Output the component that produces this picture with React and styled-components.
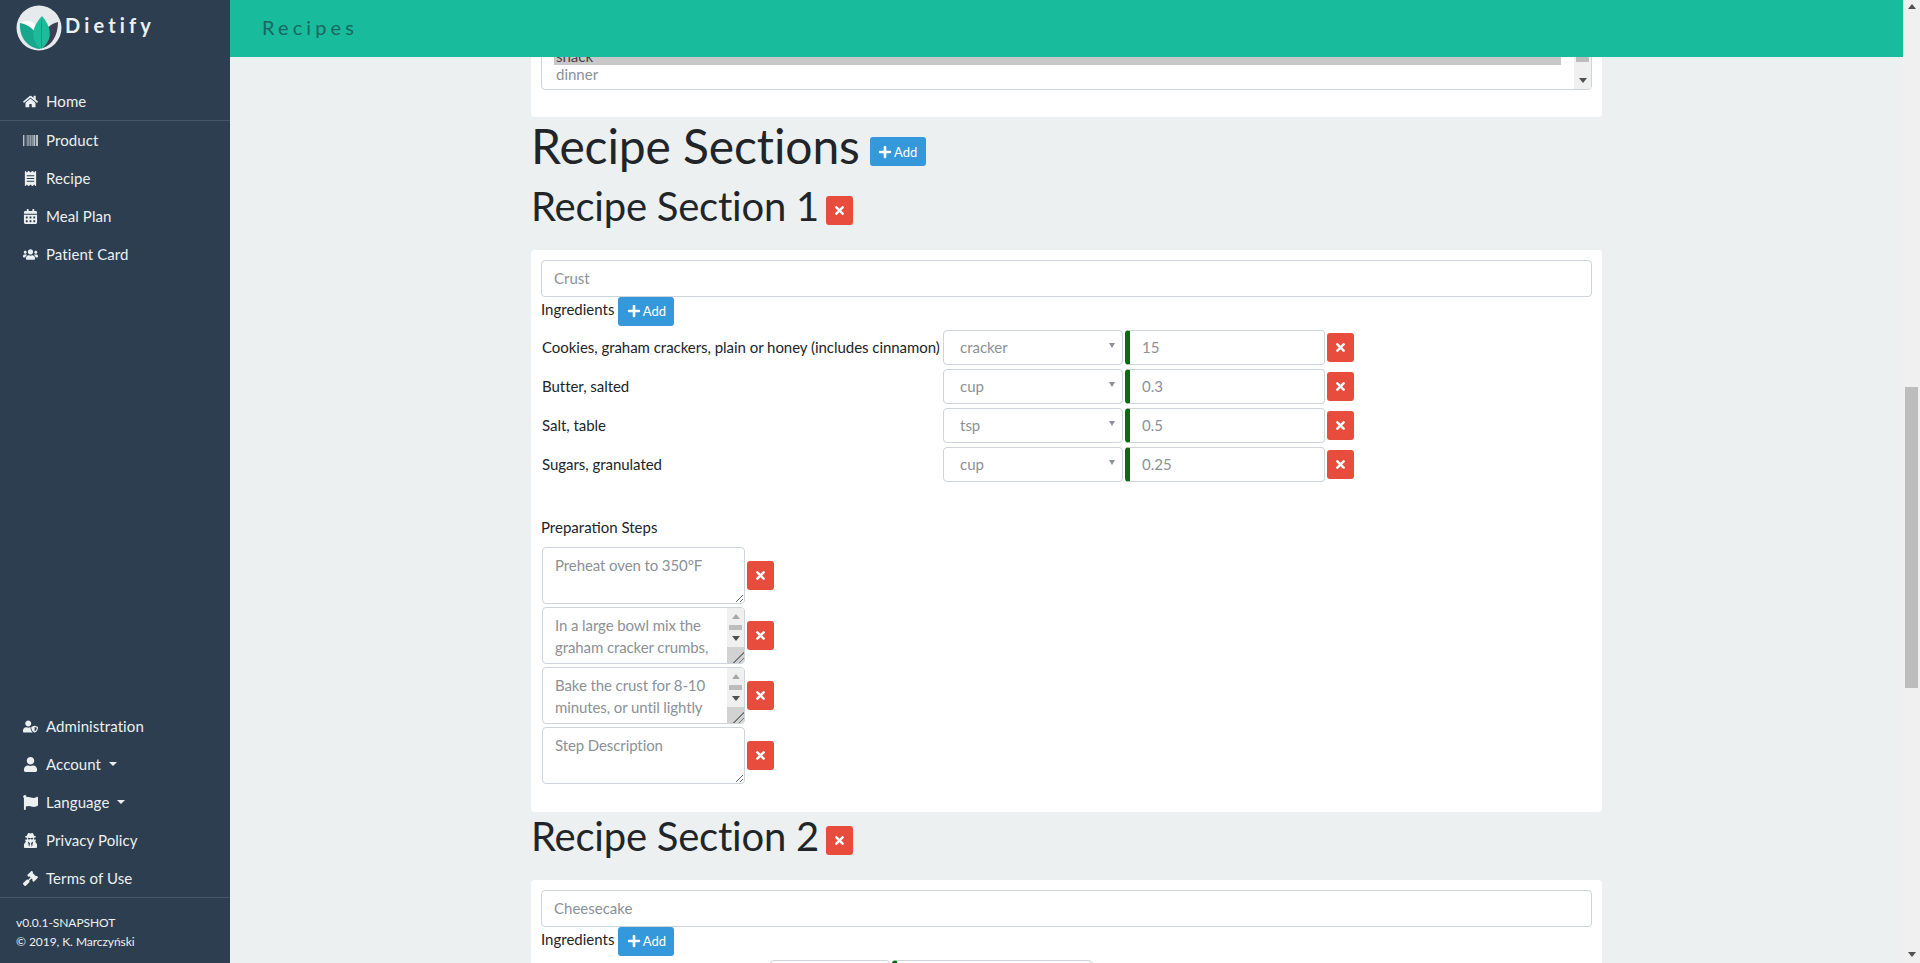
import React from 'react'
import styled, { createGlobalStyle } from 'styled-components'
import {
  FaHome,
  FaBarcode,
  FaReceipt,
  FaCalendarAlt,
  FaUsers,
  FaUserShield,
  FaUser,
  FaFlag,
  FaUserSecret,
  FaGavel,
  FaPlus,
  FaTimes,
} from 'react-icons/fa'

const GlobalStyle = createGlobalStyle`
  html, body {
    margin: 0;
    height: 100%;
    overflow: hidden;
  }
  body {
    font-family: Lato, "Liberation Sans", sans-serif;
    font-size: 15px;
    line-height: 1.5;
    color: #212529;
    background: #ecf0f1;
  }
  * {
    box-sizing: border-box;
  }
`

const Layout = styled.div`
  display: grid;
  grid-template-columns: 230px 1fr 17px;
  height: 963px;
  overflow: hidden;
`

const Sidebar = styled.aside`
  background: #2c3e50;
  color: #ecf0f1;
  display: flex;
  flex-direction: column;
  height: 963px;
`

const Brand = styled.div`
  display: flex;
  align-items: flex-start;
  height: 82px;
  padding: 5px 0 0 16px;
  gap: 3px;
`

const BrandName = styled.span`
  font-size: 20px;
  font-weight: 700;
  letter-spacing: 4.15px;
  line-height: 40px;
  color: #ecf0f1;
`

const NavList = styled.nav`
  display: flex;
  flex-direction: column;
`

const NavItem = styled.a`
  display: flex;
  align-items: center;
  height: 38px;
  padding-left: 23px;
  color: #ecf0f1;
  letter-spacing: 0.08px;
  white-space: nowrap;
`

const NavIcon = styled.span`
  display: inline-flex;
  flex: 0 0 23px;
  svg {
    width: auto;
    height: 15px;
  }
`

const Caret = styled.span`
  width: 0;
  height: 0;
  margin-left: 8px;
  border-top: 4px solid #ecf0f1;
  border-left: 4px solid transparent;
  border-right: 4px solid transparent;
`

const Divider = styled.hr`
  margin: 0;
  border: 0;
  border-top: 1px solid #44576a;
`

const Spacer = styled.div`
  flex: 1;
`

const Footer = styled.div`
  flex: 0 0 65px;
  padding: 15px 16px 0;
  font-size: 12px;
  line-height: 19px;
  letter-spacing: -0.06px;
`

const Main = styled.div`
  display: flex;
  flex-direction: column;
  height: 963px;
  overflow: hidden;
  min-width: 0;
`

const TopBar = styled.header`
  position: relative;
  z-index: 1;
  flex: 0 0 57px;
  background: #18bc9c;
  display: flex;
  align-items: center;
  padding: 0 0 4px 32px;
  font-size: 20px;
  letter-spacing: 4.1px;
  color: #1b6660;
`

const Content = styled.main`
  flex: 1;
  min-height: 0;
  width: 1071px;
  margin-left: 301px;
`

/* the page is scrolled: the first card starts above the top bar */
const Card = styled.section`
  background: #fff;
  border-radius: 4px;
  padding: 10px 10px ${p => p.$bottom || 10}px;
  margin-top: ${p => p.$top || 0}px;
`

const ListBox = styled.div`
  display: flex;
  height: 44px;
  border: 1px solid #ced4da;
  border-radius: 4px;
  overflow: hidden;
`

const ListOptions = styled.div`
  flex: 1;
  padding-left: 12px;
  color: #8b9197;
`

const ListOption = styled.div`
  padding-left: 2px;
  margin-right: 13px;
  height: 18px;
  line-height: 18px;
  background: ${p => (p.$selected ? '#c8c8c8' : 'transparent')};
  color: ${p => (p.$selected ? '#444' : 'inherit')};
`

const ListRail = styled.div`
  width: 17px;
  background: #f0f0f0;
  display: flex;
  flex-direction: column;
  justify-content: space-between;
  align-items: center;
`

const ListThumb = styled.div`
  width: 13px;
  height: 15px;
  background: #bdbdbd;
`

const ArrowDown = styled.span`
  width: 0;
  height: 0;
  margin-bottom: ${p => (p.$centered ? '0' : '6px')};
  border-top: 5px solid #505050;
  border-left: 4.5px solid transparent;
  border-right: 4.5px solid transparent;
`

const ArrowUp = styled.span`
  width: 0;
  height: 0;
  margin-top: ${p => (p.$centered ? '0' : '4px')};
  border-bottom: 5px solid ${p => (p.$muted ? '#a8a8a8' : '#505050')};
  border-left: 4.5px solid transparent;
  border-right: 4.5px solid transparent;
`

const Button = styled.button`
  display: inline-flex;
  flex: none;
  align-items: center;
  justify-content: center;
  gap: 2px;
  height: 29px;
  width: ${p => (p.$danger ? '27px' : '56px')};
  padding: 0;
  border: 0;
  border-radius: 3px;
  font-family: inherit;
  font-size: 13px;
  font-weight: 400;
  letter-spacing: 0;
  color: #fff;
  background: ${p => (p.$danger ? '#e74c3c' : '#3498db')};
  svg {
    font-size: ${p => (p.$danger ? 13 : 14)}px;
  }
`

const HeadingOne = styled.h1`
  display: flex;
  align-items: center;
  gap: 10px;
  height: 58px;
  margin: 0 0 7px;
  font-size: 48px;
  font-weight: 400;
  line-height: 58px;
  letter-spacing: -0.12px;
  ${Button} {
    margin-top: 11px;
  }
`

const HeadingTwo = styled.h2`
  display: flex;
  align-items: center;
  gap: 7px;
  height: 48px;
  margin: 0 0 20px;
  font-size: 40px;
  font-weight: 400;
  line-height: 48px;
  letter-spacing: -0.22px;
  ${Button} {
    margin-top: 9px;
  }
`

const TextInput = styled.input`
  display: block;
  width: 100%;
  height: 36.5px;
  padding: 0 12px;
  border: 1px solid #ced4da;
  border-radius: 4px;
  font-family: inherit;
  font-size: 15px;
  color: #495057;
  background: #fff;
  &::placeholder {
    color: #8b9197;
    opacity: 1;
  }
`

const LabelRow = styled.div`
  display: flex;
  align-items: flex-start;
  gap: 4px;
  height: 33px;
`

const LabelText = styled.span`
  line-height: 24px;
`

const Rows = styled.div`
  display: grid;
  grid-template-columns: ${p => p.$columns};
  grid-auto-rows: 35px;
  row-gap: 4px;
  column-gap: 2px;
  align-items: center;
`

const RowLabel = styled.span`
  padding-left: 1px;
  letter-spacing: -0.04px;
  white-space: nowrap;
  overflow: hidden;
`

const UnitSelect = styled.div`
  display: flex;
  align-items: center;
  justify-content: space-between;
  height: 35px;
  padding: 0 7px 0 16px;
  border: 1px solid #ced4da;
  border-radius: 4px;
  color: #8b9197;
  &::after {
    content: '';
    margin-left: auto;
    border-top: 5px solid #8b9197;
    border-left: 3px solid transparent;
    border-right: 3px solid transparent;
    margin-bottom: 3px;
  }
`

const AmountBox = styled.div`
  display: flex;
  align-items: center;
  height: 35px;
  padding-left: 12px;
  border: 1px solid #ced4da;
  border-left: 5px solid #0a6c12;
  border-radius: 4px;
  color: #8b9197;
`

const StepsTitle = styled.div`
  margin-top: 34.5px;
  height: 31px;
  line-height: 22px;
`

const Steps = styled.div`
  display: flex;
  flex-direction: column;
  gap: 3px;
  padding-left: 1px;
`

const StepRow = styled.div`
  display: flex;
  align-items: center;
  gap: 2px;
`

const StepBox = styled.div`
  position: relative;
  width: 203px;
  height: 57px;
`

const StepArea = styled.textarea`
  display: block;
  width: 203px;
  height: 57px;
  padding: 6px ${p => (p.$scroll ? '29px' : '12px')} 6px 12px;
  border: 1px solid #ced4da;
  border-radius: 4px;
  font-family: inherit;
  font-size: 15px;
  line-height: 22px;
  letter-spacing: -0.1px;
  color: #8b9197;
  background: #fff;
  overflow: hidden;
  &::placeholder {
    color: #8b9197;
    opacity: 1;
  }
`

/* scrollbar and resize corner of a textarea whose text is longer than the box */
const StepRail = styled.div`
  position: absolute;
  top: 1px;
  right: 1px;
  bottom: 1px;
  width: 17px;
  display: flex;
  flex-direction: column;
  background: #f0f0f0;
  border-radius: 0 3px 3px 0;
  overflow: hidden;
`

const RailButton = styled.div`
  flex: 0 0 17px;
  display: flex;
  align-items: center;
  justify-content: center;
`

const StepThumb = styled.div`
  flex: 0 0 5px;
  margin: 0 2px;
  background: #bdbdbd;
`

const ResizeCorner = styled.div`
  flex: 1;
  background-color: #d2d2d2;
  background-image: linear-gradient(
    135deg,
    transparent 66%,
    #777 66%,
    #777 70%,
    transparent 70%,
    transparent 82%,
    #777 82%,
    #777 86%,
    transparent 86%
  );
`

const Rail = styled.div`
  height: 963px;
  background: #f0f0f0;
  display: flex;
  flex-direction: column;
  align-items: center;
`

const RailThumb = styled.div`
  width: 13px;
  height: 301px;
  margin-top: 378px;
  background: #bdbdbd;
`

const RailGap = styled.div`
  flex: 1;
`

const Logo = () => (
  <svg width="46" height="46" viewBox="0 0 46 46">
    <circle cx="23" cy="23" r="22.5" fill="#e6eaec" />
    <path d="M4 18 C11 13 20 17 23 26 L22 30 C17 23 10 20 4 18 Z" fill="#fff" />
    <path d="M27 43 C36 40 42 30 42 17 C35 19 30 23 28 28 Z" fill="#3d3f55" />
    <path d="M24 44 C12 43 3 33 4 18 C13 19 21 27 24 36 Z" fill="#17a78c" />
    <path d="M25 44 C16 37 13 25 26 11 C38 25 35 37 25 44 Z" fill="#1abc9c" />
    <path d="M25.5 15 V43" stroke="#128a72" strokeWidth="0.7" />
  </svg>
)

const topItems = [
  { icon: <FaBarcode />, label: 'Product' },
  { icon: <FaReceipt />, label: 'Recipe' },
  { icon: <FaCalendarAlt />, label: 'Meal Plan' },
  { icon: <FaUsers />, label: 'Patient Card' },
]

const bottomItems = [
  { icon: <FaUserShield />, label: 'Administration' },
  { icon: <FaUser />, label: 'Account', caret: true },
  { icon: <FaFlag />, label: 'Language', caret: true },
  { icon: <FaUserSecret />, label: 'Privacy Policy' },
  { icon: <FaGavel />, label: 'Terms of Use' },
]

const crustRows = [
  { name: 'Cookies, graham crackers, plain or honey (includes cinnamon)', unit: 'cracker', amount: '15' },
  { name: 'Butter, salted', unit: 'cup', amount: '0.3' },
  { name: 'Salt, table', unit: 'tsp', amount: '0.5' },
  { name: 'Sugars, granulated', unit: 'cup', amount: '0.25' },
]

// only the top edge of this row is above the fold
const cheesecakeRows = [{ name: '', unit: '', amount: '' }]

const steps = [
  { placeholder: 'Preheat oven to 350°F' },
  {
    value:
      'In a large bowl mix the graham cracker crumbs, butter and sugar until well combined and press into the pan.',
  },
  {
    value:
      'Bake the crust for 8-10 minutes, or until lightly browned, then leave it to cool on a wire rack.',
  },
  { placeholder: 'Step Description' },
]

const AddButton = () => (
  <Button>
    <FaPlus />
    Add
  </Button>
)

const RemoveButton = () => (
  <Button $danger aria-label="Remove">
    <FaTimes />
  </Button>
)

const IngredientRows = ({ rows, columns }) => (
  <Rows $columns={columns}>
    {rows.map((row, index) => (
      <React.Fragment key={index}>
        <RowLabel>{row.name}</RowLabel>
        <UnitSelect>{row.unit}</UnitSelect>
        <AmountBox>{row.amount}</AmountBox>
        <RemoveButton />
      </React.Fragment>
    ))}
  </Rows>
)

const Step = ({ step }) => (
  <StepRow>
    <StepBox>
      <StepArea
        $scroll={Boolean(step.value)}
        placeholder={step.placeholder}
        defaultValue={step.value}
      />
      {step.value && (
        <StepRail>
          <RailButton>
            <ArrowUp $centered $muted />
          </RailButton>
          <StepThumb />
          <RailButton>
            <ArrowDown $centered />
          </RailButton>
          <ResizeCorner />
        </StepRail>
      )}
    </StepBox>
    <RemoveButton />
  </StepRow>
)

const App = () => (
  <Layout>
    <GlobalStyle />
    <Sidebar>
      <Brand>
        <Logo />
        <BrandName>Dietify</BrandName>
      </Brand>
      <NavList>
        <NavItem>
          <NavIcon>
            <FaHome />
          </NavIcon>
          Home
        </NavItem>
      </NavList>
      <Divider />
      <NavList>
        {topItems.map(item => (
          <NavItem key={item.label}>
            <NavIcon>{item.icon}</NavIcon>
            {item.label}
          </NavItem>
        ))}
      </NavList>
      <Spacer />
      <NavList>
        {bottomItems.map(item => (
          <NavItem key={item.label}>
            <NavIcon>{item.icon}</NavIcon>
            {item.label}
            {item.caret && <Caret />}
          </NavItem>
        ))}
      </NavList>
      <Divider />
      <Footer>
        v0.0.1-SNAPSHOT
        <br />© 2019, K. Marczyński
      </Footer>
    </Sidebar>
    <Main>
      <TopBar>Recipes</TopBar>
      <Content>
        <Card $top={-21} $bottom={27}>
          <ListBox>
            <ListOptions>
              <ListOption $selected>snack</ListOption>
              <ListOption>dinner</ListOption>
            </ListOptions>
            <ListRail>
              <ListThumb />
              <ArrowDown />
            </ListRail>
          </ListBox>
        </Card>
        <HeadingOne>
          Recipe Sections
          <AddButton />
        </HeadingOne>
        <HeadingTwo>
          Recipe Section 1
          <RemoveButton />
        </HeadingTwo>
        <Card $bottom={28}>
          <TextInput placeholder="Crust" readOnly />
          <LabelRow>
            <LabelText>Ingredients</LabelText>
            <AddButton />
          </LabelRow>
          <IngredientRows rows={crustRows} columns="400px 180px 200px 27px" />
          <StepsTitle>Preparation Steps</StepsTitle>
          <Steps>
            {steps.map((step, index) => (
              <Step key={index} step={step} />
            ))}
          </Steps>
        </Card>
        <HeadingTwo>
          Recipe Section 2
          <RemoveButton />
        </HeadingTwo>
        <Card>
          <TextInput placeholder="Cheesecake" readOnly />
          <LabelRow>
            <LabelText>Ingredients</LabelText>
            <AddButton />
          </LabelRow>
          <IngredientRows rows={cheesecakeRows} columns="227px 120px 200px 27px" />
        </Card>
      </Content>
    </Main>
    <Rail>
      <ArrowUp />
      <RailThumb />
      <RailGap />
      <ArrowDown />
    </Rail>
  </Layout>
)

export default App
